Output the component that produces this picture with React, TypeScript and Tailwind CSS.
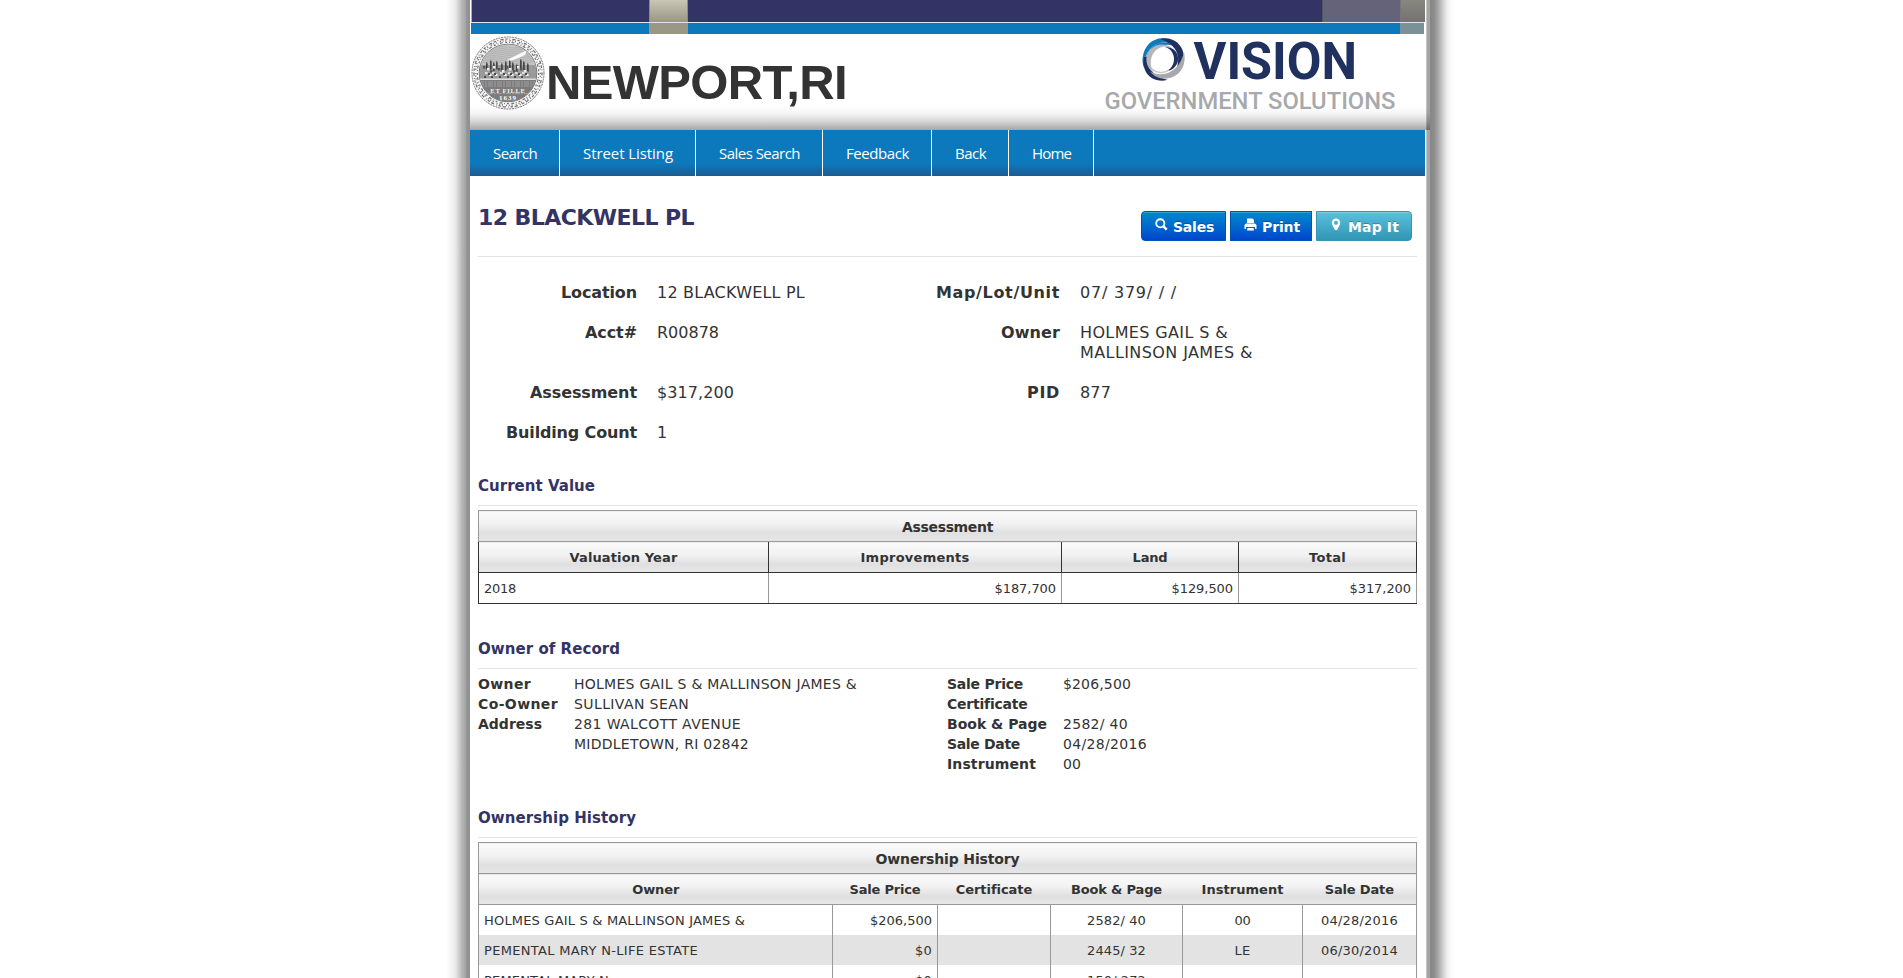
import React from "react";

function Fit({ w, children, className = "" }: { w: number; children: string; className?: string }) {
  const ref = React.useRef<HTMLSpanElement>(null);
  const [ls, setLs] = React.useState(0);
  React.useLayoutEffect(() => {
    if (ref.current && children.length) {
      const n = ref.current.getBoundingClientRect().width;
      setLs((w - n) / children.length);
    }
  }, []);
  return (
    <span ref={ref} className={`inline-block whitespace-nowrap ${className}`} style={{ letterSpacing: ls + "px" }}>
      {children}
    </span>
  );
}

function Seal() {
  const houses = [15, 19, 22, 25, 30, 34, 38, 41, 45, 49, 52, 56];
  return (
    <svg viewBox="0 0 74 74" className="h-[74px] w-[74px] shrink-0">
      <defs>
        <clipPath id="disc"><circle cx="37" cy="37" r="28.5" /></clipPath>
      </defs>
      <circle cx="37" cy="37" r="36" fill="#f6f6f6" stroke="#666" strokeWidth="0.9" strokeDasharray="2 0.8" />
      <g fill="none" stroke="#707070">
        <circle cx="37" cy="37" r="34" strokeWidth="1.2" strokeDasharray="2.4 1.6 0.8 2.3 3.2 1.8" />
        <circle cx="37" cy="37" r="32.400" strokeWidth="1.5" strokeDasharray="0.9 1.9 0.9 3.2 1.2 1.7" />
        <circle cx="37" cy="37" r="30.700" strokeWidth="1.2" strokeDasharray="2 2 0.9 1.6 2.9 2.400" />
      </g>
      <circle cx="37" cy="37" r="28.800" fill="#c4c4c4" stroke="#555" strokeWidth="0.8" />
      <g clipPath="url(#disc)">
        <path d="M4 6h66v26H4z" fill="#c4c4c4" />
        <g stroke="#a4a4a4" strokeWidth="0.6" fill="none">
          {[9, 11, 13, 15, 17, 19, 21, 23, 25].map((y) => <path key={y} d={`M6 ${y + 3}q14 -4 28 -1t34 -3`} />)}
        </g>
        <path d="M36 24l8-4 12-6-2 5-9 4-6 2z" fill="#fafafa" />
        <path d="M8 29h58v15H8z" fill="#9a9a9a" />
        {houses.map((x, i) => <path key={x} d={`M${x} ${33 + (i % 3)}v-${5 + ((i * 3) % 4)}l0.8-2.500 0.900 2.500v7z`} fill="#444" />)}
        {houses.map((x, i) => <path key={x} d={`M${x - 3} ${30 + (i % 3) * 2}h2.400v2.400h-2.400z`} fill={i % 2 ? "#eee" : "#555"} />)}
        {houses.map((x, i) => <path key={x} d={`M${x - 1} ${36 + (i % 2) * 2}h2.600v2h-2.600z`} fill={i % 2 ? "#f0f0f0" : "#dcdcdc"} />)}
        {houses.map((x, i) => <path key={x} d={`M${x - 2} ${40 - (i % 2) * 3}h2v2h-2z`} fill="#4c4c4c" />)}
        <path d="M8 42.500h58v1.500H8z" fill="#dedede" />
        <path d="M8 44h58v24H8z" fill="#7c7c7c" />
        <g stroke="#b0b0b0" strokeWidth="0.7">
          {[46, 48, 50, 57.500, 65].map((y) => <path key={y} d={`M8 ${y}h58`} strokeDasharray="5 1 2 1" />)}
        </g>
      </g>
      <text x="37" y="56.500" textAnchor="middle" fontFamily="Liberation Serif, serif" fontWeight="700" fontSize="6.500" letterSpacing="0.7" fill="#f2f2f2">ET FILLE</text>
      <text x="37" y="64" textAnchor="middle" fontFamily="Liberation Serif, serif" fontWeight="700" fontSize="7" letterSpacing="1" fill="#fff">1639</text>
    </svg>
  );
}

function VisionLogo() {
  return (
    <svg viewBox="0 0 306 80" className="h-20 w-[306px] overflow-visible">
      <path d="M67 4.500C56 3 46 11 44.600 24c-.3 4 .3 7 1.400 9.500C46 24 50 12 62 9c7-1.500 13 1 16.500 5C77 9 73 5.300 67 4.500z" fill="#0d79be" />
      <path d="M48 33C46 20 53 9.500 65 8.500c5-.3 9 1 12 4-3-1.500-8-2.500-13-1C54 14 49 22 50 33z" fill="#0d79be" />
      <path d="M62 5c11-3 22 4 23.500 15 1 9-3 16-9 20 3-7 5-14 2.500-21C76.500 12 70 7.500 62 5z" fill="#20305f" />
      <path d="M46 23c-2.500 12 4 22 15 23.500 3 .4 6 0 8.500-.8C62 44 54 40 51 33c-1.500-4-1.500-7-.5-11-2 1-3 1-4.500 1z" fill="#20305f" />
      <path d="M86 18c3 13-4 25-17 26.500-7 .8-13-2-17-7 6 3 13 4 20 .5C79.500 34 84 27 86 18z" fill="#a7a9ac" />
      <path d="M62 10.500c-9 1.500-14.500 8-13.500 17 .7 5 3.500 9 7.500 11.500-3-5-4.500-11-2-17C56 17 60 13.500 66 12.500c5 0 9 3 10.500 6C75 13 69 9.700 62 10.500z" fill="#b4b6b9" />
      <path d="M67 13c7 2 10.500 9 8.500 16-1.300 4-4 7-7.500 8.500 6-1 11-5 12-11C81 18 75 13 67 13z" fill="#20305f" />
      <path d="M54 35c5 4.500 12 4.500 17 1" stroke="#c4c6c9" strokeWidth="1.4" fill="none" />
      <text x="95.500" y="45" textLength="163.500" lengthAdjust="spacingAndGlyphs" fontFamily="Roboto, sans-serif" fontWeight="700" fontSize="52.500" fill="#20305f">VISION</text>
      <text x="6.500" y="75" textLength="291" lengthAdjust="spacingAndGlyphs" fontFamily="Roboto, sans-serif" fontSize="24" fontWeight="500" fill="#a7a9ac">GOVERNMENT SOLUTIONS</text>
    </svg>
  );
}

const nav: [string, number, string][] = [
  ["Search", 44, "w-[90px]"],
  ["Street Listing", 90, "w-[136px]"],
  ["Sales Search", 81, "w-[127px]"],
  ["Feedback", 63, "w-[109px]"],
  ["Back", 31, "w-[77px]"],
  ["Home", 39, "w-[85px]"],
];

function Header() {
  return (
    <header className="relative h-[130px] bg-white">
      <div className="h-[22px] pl-px">
        <div className="flex h-[22px] w-[954px] border-l border-[#a9a9c2] bg-[#333366]">
          <div className="ml-[177px] w-[39px] border-x border-[#8f8c80] bg-gradient-to-b from-[#c9c6b6] to-[#9a9785]" />
          <div className="ml-[634px] w-[78px] border-l border-[#555463] bg-[#65637a]" />
          <div className="w-[25px] border-l border-[#777] bg-gradient-to-b from-[#888780] to-[#73736f]" />
        </div>
      </div>
      <div className="ml-px flex h-3 w-[953px] border-t border-[#dfe3ee] bg-[#0c79bd]">
        <div className="ml-[178px] w-[39px] bg-[#9a9785]" />
        <div className="ml-[712px] w-6 bg-[#7a9198]" />
      </div>
      <div className="flex h-[76px] pl-px">
        <div className="pt-[2px]"><Seal /></div>
        <div className="pt-[18px] pl-px">
          <Fit w={301} className="font-['Liberation_Sans',sans-serif] text-[49px] leading-[60px] font-bold text-[#333]">NEWPORT,RI</Fit>
        </div>
        <div className="ml-auto pr-[21px]"><VisionLogo /></div>
      </div>
      <div className="absolute bottom-0 left-0 z-10 h-6 w-[960px] bg-[linear-gradient(rgba(0,0,0,0),rgba(0,0,0,0.04)_30%,rgba(0,0,0,0.15)_62%,rgba(0,0,0,0.35))]" />
    </header>
  );
}

const hd = "bg-[linear-gradient(#fafafa,#f2f2f2_40%,#e0e0e0_72%,#e6e6e6)]";

function Section({ title, w, className = "" }: { title: string; w: number; className?: string }) {
  return (
    <h2 className={`h-[31px] border-b border-[#e3e3e3] pt-px text-[15px] leading-5 font-bold text-[#333366] ${className}`}>
      <Fit w={w}>{title}</Fit>
    </h2>
  );
}

const details: [string, number, string, number][] = [
  ["Location", 76, "12 BLACKWELL PL", 148],
  ["Acct#", 52, "R00878", 62],
  ["Assessment", 107, "$317,200", 77],
  ["Building Count", 131, "1", 10],
];

const btn = "flex h-[30px] shrink-0 items-center border text-[14px] leading-5 font-bold text-white shadow-[inset_0_1px_0_rgba(255,255,255,0.2)] [text-shadow:0_-1px_0_rgba(0,0,0,0.25)]";

function Details() {
  return (
    <div className="flex h-[180px] text-base leading-5">
      <div className="w-[423px]">
        {details.map(([l, lw, v, vw], i) => (
          <div key={l} className={`flex ${i === 1 ? "h-[60px]" : "h-10"}`}>
            <div className="w-[159px] text-right font-bold"><Fit w={lw}>{l}</Fit></div>
            <div className="pl-5"><Fit w={vw}>{v}</Fit></div>
          </div>
        ))}
      </div>
      <div>
        <div className="flex h-10">
          <div className="w-[159px] text-right font-bold"><Fit w={124}>Map/Lot/Unit</Fit></div>
          <div className="pl-5"><Fit w={97}>07/ 379/ / /</Fit></div>
        </div>
        <div className="flex h-[60px]">
          <div className="w-[159px] text-right font-bold"><Fit w={59}>Owner</Fit></div>
          <div className="flex flex-col items-start pl-5"><Fit w={148}>HOLMES GAIL S &</Fit><Fit w={173}>MALLINSON JAMES &</Fit></div>
        </div>
        <div className="flex h-10">
          <div className="w-[159px] text-right font-bold"><Fit w={33}>PID</Fit></div>
          <div className="pl-5"><Fit w={31}>877</Fit></div>
        </div>
      </div>
    </div>
  );
}

function Pair({ l, lw, v, vw, col }: { l: string; lw: number; v: string; vw: number; col: string }) {
  return (
    <div className="flex h-5">
      <div className={`${col} font-bold`}>{l && <Fit w={lw}>{l}</Fit>}</div>
      <div>{v && <Fit w={vw}>{v}</Fit>}</div>
    </div>
  );
}

const history: [string, number, string, number, string, string, string][] = [
  ["HOLMES GAIL S & MALLINSON JAMES &", 261, "$206,500", 62, "2582/ 40", "00", "04/28/2016"],
  ["PEMENTAL MARY N-LIFE ESTATE", 214, "$0", 17, "2445/ 32", "LE", "06/30/2014"],
  ["PEMENTAL MARY N", 125, "$0", 17, "150/ 272", "", ""],
];

export default function App() {
  return (
    <div className="flex h-[978px] overflow-hidden bg-white font-['DejaVu_Sans',Verdana,sans-serif] text-[#333]">
      <div className="ml-[446px] w-6 shrink-0 bg-[linear-gradient(90deg,#fff,#f7f7f7_4px,#ececec_9px,#cfcfcf_13px,#b4b6b5_16px,#a3a5a4_20px,#969897_20px,#8e8e8e)]" />
      <div className="w-[955px] shrink-0">
        <Header />
        <nav className="flex h-[46px] bg-[linear-gradient(#0c79bd_72%,#1d5c92)] font-['Open_Sans',sans-serif] text-[15px] leading-[46px] text-white">
          {nav.map(([t, w, c]) => (
            <div key={t} className={`${c} shrink-0 border-r border-white pl-px text-center`}><Fit w={w}>{t}</Fit></div>
          ))}
        </nav>
        <main className="px-2">
          <div className="flex h-[81px] justify-between border-b border-[#e3e3e3]">
            <h1 className="pt-[27px] text-[22px] leading-[30px] font-bold text-[#333366]"><Fit w={216}>12 BLACKWELL PL</Fit></h1>
            <div className="flex gap-1 pt-[35px] pr-[5px]">
              <a className={`${btn} w-[85px] rounded-l border-[#0055b3] bg-gradient-to-b from-[#0088cc] to-[#0044cc] pl-[13px]`}>
                <svg viewBox="0 0 13 13" className="mr-[5px] mb-[3px] h-[13px] w-[13px]"><circle cx="5.300" cy="5.300" r="4.100" fill="none" stroke="#fff" strokeWidth="1.900" /><path d="M8.200 8.200l3.500 3.500" stroke="#fff" strokeWidth="2.400" /></svg>
                <Fit w={41} className="pt-0.5">Sales</Fit>
              </a>
              <a className={`${btn} w-[82px] border-[#0055b3] bg-gradient-to-b from-[#0088cc] to-[#0044cc] pl-[13px]`}>
                <svg viewBox="0 0 13 13" className="mr-[5px] mb-[3px] h-[13px] w-[13px]" fill="#fff"><path d="M3.500 0.500h5l1.500 1.500v3H3V1z M2 5.500h9l1.500 1.500v4H11V9H2v2H0.500V7z M3.500 10h6l0.500 2.500H3z" /></svg>
                <Fit w={38} className="pt-0.5">Print</Fit>
              </a>
              <a className={`${btn} w-24 rounded-r border-[#3596b3] bg-gradient-to-b from-[#5bc0de] to-[#2f96b4] pl-[14px]`}>
                <svg viewBox="0 0 10 13" className="mr-[7px] mb-[3px] h-[13px] w-[10px]" fill="#fff"><path fillRule="evenodd" d="M5 0.500a4.200 4.200 0 0 1 4.200 4.200c0 2.500-2 4.300-3 7.300h-2.400c-1-3-3-4.800-3-7.300A4.200 4.200 0 0 1 5 0.500zM5 2.700a2.100 2.100 0 1 0 0 4.200 2.100 2.100 0 0 0 0-4.200z" /></svg>
                <Fit w={51} className="pt-0.5">Map It</Fit>
              </a>
            </div>
          </div>
          <div className="pt-[26px]"><Details /></div>
          <Section title="Current Value" w={117} className="mt-3" />
          <table className="mt-1 w-[939px] table-fixed border-collapse text-[13px]">
            <colgroup><col className="w-[290px]" /><col className="w-[293px]" /><col className="w-[177px]" /><col className="w-[178px]" /></colgroup>
            <tbody>
              <tr className="h-[31px]"><th colSpan={4} className={`${hd} border border-[#999] p-0 pt-0.5 text-[14px]`}><Fit w={91}>Assessment</Fit></th></tr>
              <tr className="h-[31px]">
                {([["Valuation Year", 108], ["Improvements", 109], ["Land", 35], ["Total", 37]] as [string, number][]).map(([t, w]) => (
                  <th key={t} className={`${hd} border border-[#333] p-0 pt-0.5`}><Fit w={w}>{t}</Fit></th>
                ))}
              </tr>
              <tr className="h-[31px]">
                <td className="border border-r-[#999] border-b-[#333] border-l-[#333] px-[5px] pt-0.5"><Fit w={32}>2018</Fit></td>
                {["$187,700", "$129,500", "$317,200"].map((t) => (
                  <td key={t} className="border border-x-[#999] border-b-[#333] px-[5px] pt-0.5 text-right"><Fit w={61.5}>{t}</Fit></td>
                ))}
              </tr>
            </tbody>
          </table>
          <Section title="Owner of Record" w={142} className="mt-[34px]" />
          <div className="flex pt-[5px] text-[14px] leading-5">
            <div className="w-[469px]">
              <Pair l="Owner" lw={53} v="HOLMES GAIL S & MALLINSON JAMES &" vw={283} col="w-24" />
              <Pair l="Co-Owner" lw={80} v="SULLIVAN SEAN" vw={115} col="w-24" />
              <Pair l="Address" lw={64} v="281 WALCOTT AVENUE" vw={167} col="w-24" />
              <Pair l="" lw={0} v="MIDDLETOWN, RI 02842" vw={175} col="w-24" />
            </div>
            <div>
              <Pair l="Sale Price" lw={76} v="$206,500" vw={68} col="w-[116px]" />
              <Pair l="Certificate" lw={80} v="" vw={0} col="w-[116px]" />
              <Pair l="Book & Page" lw={100} v="2582/ 40" vw={65} col="w-[116px]" />
              <Pair l="Sale Date" lw={73} v="04/28/2016" vw={84} col="w-[116px]" />
              <Pair l="Instrument" lw={89} v="00" vw={18} col="w-[116px]" />
            </div>
          </div>
          <Section title="Ownership History" w={158} className="mt-[33px]" />
          <table className="mt-1 w-[939px] table-fixed border-collapse text-[13px]">
            <colgroup><col className="w-[354px]" /><col className="w-[105px]" /><col className="w-[113px]" /><col className="w-[132px]" /><col className="w-[120px]" /><col className="w-[114px]" /></colgroup>
            <tbody>
              <tr className="h-[31px]"><th colSpan={6} className={`${hd} border border-[#999] p-0 pt-0.5 text-[14px]`}><Fit w={144}>Ownership History</Fit></th></tr>
              <tr className={`h-[31px] border border-[#999] ${hd}`}>
                {([["Owner", 47], ["Sale Price", 71], ["Certificate", 76], ["Book & Page", 91], ["Instrument", 82], ["Sale Date", 69]] as [string, number][]).map(([t, w]) => (
                  <th key={t} className="p-0 pt-0.5"><Fit w={w}>{t}</Fit></th>
                ))}
              </tr>
              {history.map(([o, ow, p, pw, b, ins, d], i) => (
                <tr key={o} className={`h-[30px] ${i % 2 ? "bg-[#e3e3e3]" : "bg-white"}`}>
                  <td className="border-x border-[#999] px-[5px] pt-0.5"><Fit w={ow}>{o}</Fit></td>
                  <td className="border-x border-[#999] px-[5px] pt-0.5 text-right"><Fit w={pw}>{p}</Fit></td>
                  <td className="border-x border-[#999]" />
                  <td className="border-x border-[#999] p-0 pt-0.5 text-center"><Fit w={59}>{b}</Fit></td>
                  <td className="border-x border-[#999] p-0 pt-0.5 text-center">{ins && <Fit w={16}>{ins}</Fit>}</td>
                  <td className="border-x border-[#999] p-0 pt-0.5 text-center">{d && <Fit w={77}>{d}</Fit>}</td>
                </tr>
              ))}
            </tbody>
          </table>
        </main>
      </div>
      <div className="w-[30px] shrink-0 bg-[linear-gradient(90deg,#fff_1px,#c4c4c4_1px,#c4c4c4_2px,#a5a5a5_2px,#a5a5a5_5px,#868686_5px,#8c8c8c_9px,#a6a6a6_13px,#cfcfcf_18px,#eeeeee_22px,#fafafa_26px,#fff)]" />
    </div>
  );
}
